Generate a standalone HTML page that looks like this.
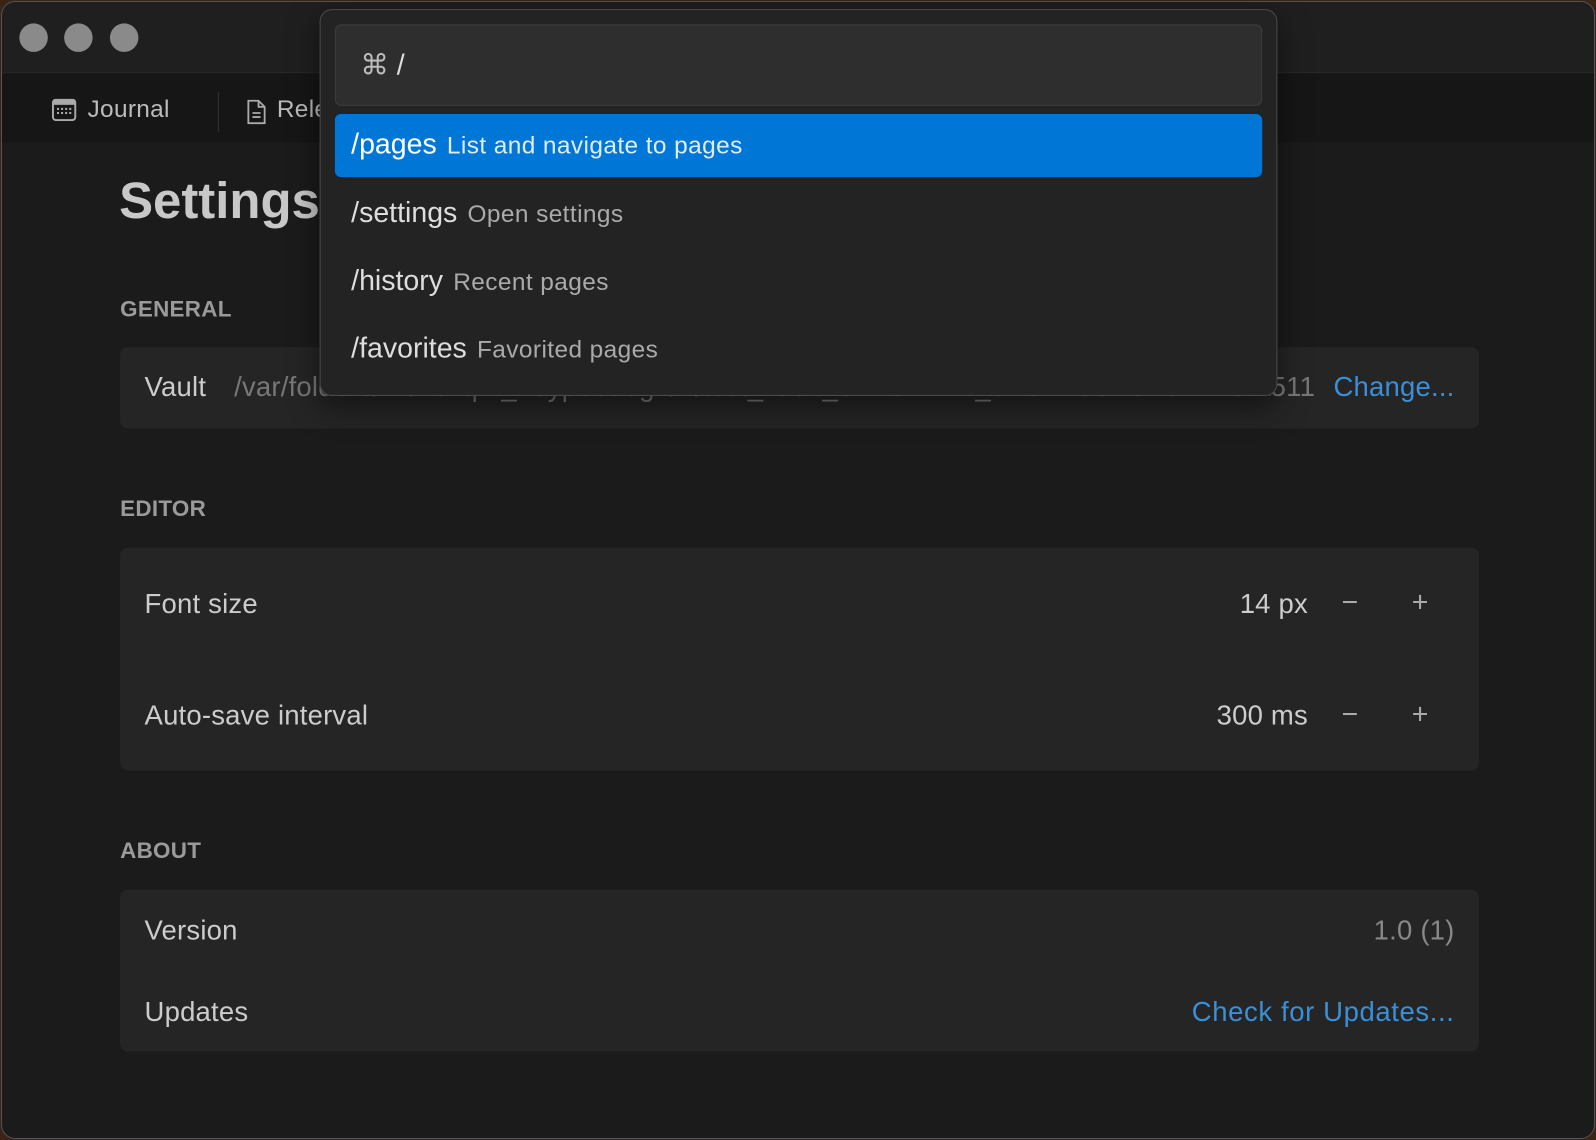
<!DOCTYPE html>
<html><head><meta charset="utf-8"><style>
html,body{margin:0;padding:0;width:1596px;height:1140px;overflow:hidden;background:#3a2416;}
#w{position:absolute;left:0;top:0;width:1568px;height:1120px;transform:scale(1.01786);transform-origin:0 0;font-family:"Liberation Sans",sans-serif;}
.win{position:absolute;left:1px;top:1px;width:1564px;height:1116px;border-radius:14px;background:#1b1b1b;border:1px solid #555;overflow:hidden;}
.tb{position:absolute;left:0;top:0;right:0;height:69px;background:#1f1f1f;border-bottom:1px solid #2a2a2a;}
.dot{position:absolute;top:21px;width:28px;height:28px;border-radius:50%;background:#8a8a8a;}
.tabs{position:absolute;left:0;top:70px;right:0;height:68px;background:#161616;}
.t{position:absolute;color:#bbb;font-size:24px;top:92px;letter-spacing:0.3px;}
.abs{position:absolute;}
.lbl{position:absolute;left:116px;color:#9a9a9a;font-size:22px;font-weight:bold;letter-spacing:0.3px;}
.card{position:absolute;left:116px;width:1335px;background:#252525;border-radius:8px;}
.rt{position:absolute;color:#ccc;font-size:27px;letter-spacing:0.2px;white-space:nowrap;}
.pal{position:absolute;left:314px;top:9px;width:939px;height:378px;background:#232323;border:1px solid #4a4a4a;border-radius:12px;box-shadow:0 10px 30px rgba(0,0,0,.5);}
.it{position:absolute;left:14px;width:911px;height:62px;border-radius:6px;}
.it .c{position:absolute;left:16px;top:14px;font-size:28px;color:#ddd;white-space:nowrap;}
.it .d{font-size:24px;color:#aaa;margin-left:10px;letter-spacing:0.4px;}
</style></head><body><div id="w">
<div class="win">
<div class="tb"></div>
<div class="dot" style="left:17px"></div><div class="dot" style="left:61px"></div><div class="dot" style="left:106px"></div>
<div class="tabs"></div>
<svg class="abs" style="left:49px;top:95px" width="24" height="22" viewBox="0 0 24 22"><rect x="1" y="1" width="22" height="20" rx="3" fill="none" stroke="#aaa" stroke-width="2"/><rect x="1" y="1" width="22" height="5" fill="#aaa"/><g fill="#aaa"><rect x="5" y="9" width="2" height="2"/><rect x="9" y="9" width="2" height="2"/><rect x="13" y="9" width="2" height="2"/><rect x="17" y="9" width="2" height="2"/><rect x="5" y="13" width="2" height="2"/><rect x="9" y="13" width="2" height="2"/><rect x="13" y="13" width="2" height="2"/><rect x="17" y="13" width="2" height="2"/></g></svg>
<div class="t" style="left:84px">Journal</div>
<div class="abs" style="left:212px;top:88px;width:1px;height:40px;background:#333"></div>
<svg class="abs" style="left:240px;top:95px" width="20" height="26" viewBox="0 0 20 26"><path d="M2 2h10l6 6v16H2z M12 2v6h6 M6 14h8 M6 18h8" fill="none" stroke="#aaa" stroke-width="1.8"/></svg>
<div class="t" style="left:270px">Rele</div>
<div class="abs" style="left:115px;top:166px;font-size:50px;font-weight:bold;color:#c8c8c8">Settings</div>
<div class="lbl" style="top:289px">GENERAL</div>
<div class="card" style="top:339px;height:80px">
<div class="rt" style="left:24px;top:24px">Vault</div>
<div class="rt" style="left:112px;top:24px;width:1062px;overflow:hidden;color:#777">/var/folders/4k/h8zq2f_n5yp0000gn/T/test_vault_8F2C1D7A_0B3E4C5D9E6F7A8B9C0D1511</div>
<div class="rt" style="left:1172px;width:14px;height:40px;top:20px;background:#252525"></div>
<div class="rt" style="left:1130px;top:24px;width:44px;text-align:right;color:#777;background:#252525">511</div>
<div class="rt" style="right:24px;top:24px;color:#3b8fd6">Change...</div>
</div>
<div class="lbl" style="top:485px">EDITOR</div>
<div class="card" style="top:536px;height:219px">
<div class="rt" style="left:24px;top:40px">Font size</div>
<div class="rt" style="right:168px;top:40px">14 px</div>
<div class="rt" style="left:1200px;top:38px;font-size:28px;color:#aaa">−</div>
<div class="rt" style="left:1269px;top:38px;font-size:28px;color:#aaa">+</div>
<div class="rt" style="left:24px;top:150px">Auto-save interval</div>
<div class="rt" style="right:168px;top:150px">300 ms</div>
<div class="rt" style="left:1200px;top:148px;font-size:28px;color:#aaa">−</div>
<div class="rt" style="left:1269px;top:148px;font-size:28px;color:#aaa">+</div>
</div>
<div class="lbl" style="top:821px">ABOUT</div>
<div class="card" style="top:872px;height:159px">
<div class="rt" style="left:24px;top:25px">Version</div>
<div class="rt" style="right:24px;top:25px;color:#888">1.0 (1)</div>
<div class="rt" style="left:24px;top:105px">Updates</div>
<div class="rt" style="right:24px;top:105px;color:#3b8fd6;letter-spacing:0.6px">Check for Updates...</div>
</div>
</div>
<div class="pal">
<div class="abs" style="left:14px;top:14px;width:909px;height:78px;background:#2e2e2e;border:1px solid #3d3d3d;border-radius:6px">
<div class="abs" style="left:24px;top:22px;font-size:28px;color:#bbb">⌘ <span style="color:#ddd">/</span></div></div>
<div class="it" style="top:102px;background:#0077d6"><div class="c" style="color:#fff">/pages<span class="d" style="color:#e0ecf8">List and navigate to pages</span></div></div>
<div class="it" style="top:169px"><div class="c">/settings<span class="d">Open settings</span></div></div>
<div class="it" style="top:236px"><div class="c">/history<span class="d">Recent pages</span></div></div>
<div class="it" style="top:302px"><div class="c">/favorites<span class="d">Favorited pages</span></div></div>
</div>
</div></body></html>
